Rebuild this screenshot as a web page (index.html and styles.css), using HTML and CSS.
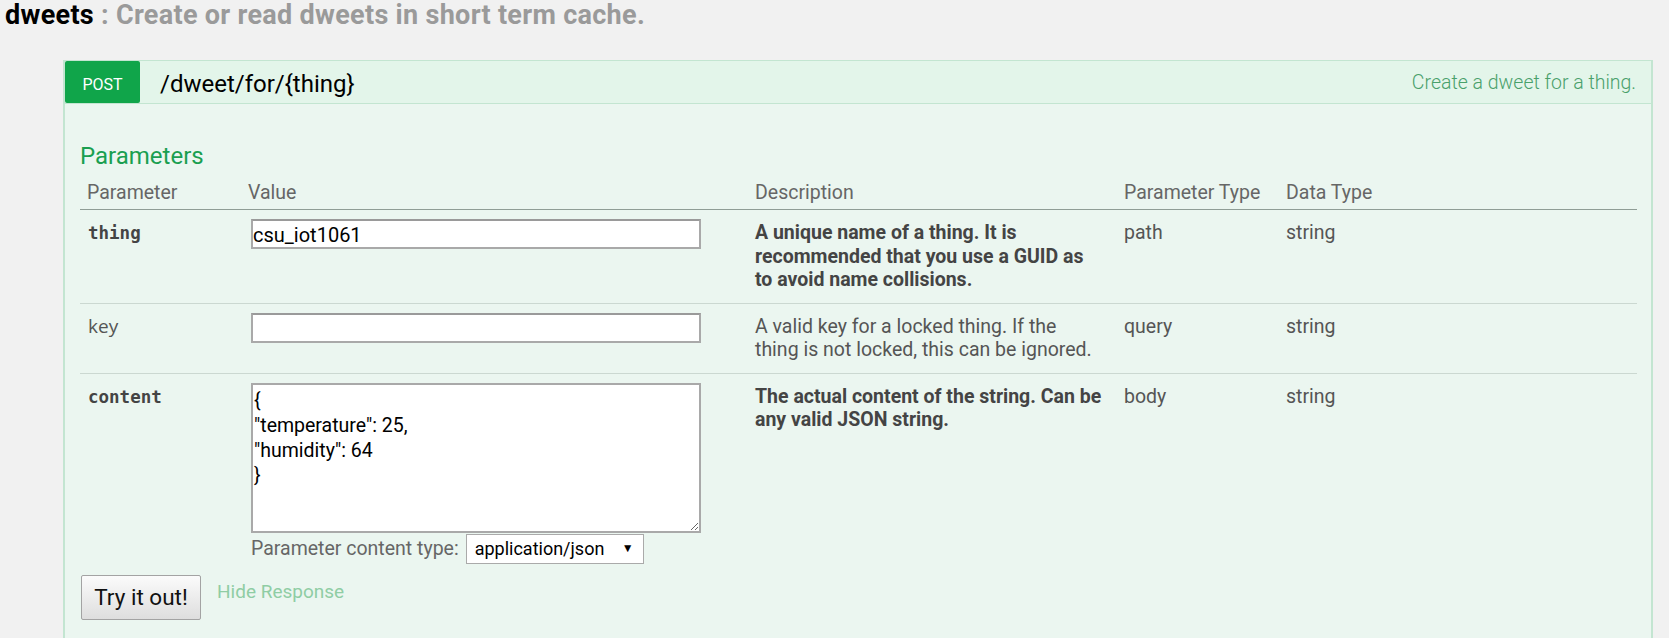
FILE: index.html
```html
<!DOCTYPE html>
<html lang="en">
<head>
<meta charset="utf-8">
<title>dweets</title>
<link rel="stylesheet" href="styles.css">
</head>
<body>
<div class="resource">
  <h2 class="res-title"><span class="res-name">dweets</span><span class="res-desc"> : Create or read dweets in short term cache.</span></h2>
  <div class="op">
    <div class="op-heading">
      <span class="method">POST</span>
      <span class="path">/dweet/for/{thing}</span>
      <span class="summary">Create a dweet for a thing.</span>
    </div>
    <div class="op-content">
      <h4 class="params-title">Parameters</h4>
      <table class="params">
        <thead>
          <tr>
            <th class="c-name">Parameter</th>
            <th class="c-value">Value</th>
            <th class="c-desc">Description</th>
            <th class="c-ptype">Parameter Type</th>
            <th class="c-dtype">Data Type</th>
          </tr>
        </thead>
        <tbody>
          <tr>
            <td class="c-name"><code class="req">thing</code></td>
            <td class="c-value"><input class="field" type="text" value="csu_iot1061"></td>
            <td class="c-desc"><strong>A unique name of a thing. It is<br>recommended that you use a GUID as<br>to avoid name collisions.</strong></td>
            <td class="c-ptype">path</td>
            <td class="c-dtype">string</td>
          </tr>
          <tr>
            <td class="c-name"><span class="opt">key</span></td>
            <td class="c-value"><input class="field" type="text" value=""></td>
            <td class="c-desc">A valid key for a locked thing. If the<br>thing is not locked, this can be ignored.</td>
            <td class="c-ptype">query</td>
            <td class="c-dtype">string</td>
          </tr>
          <tr class="last">
            <td class="c-name"><code class="req">content</code></td>
            <td class="c-value">
              <textarea class="body-area">{
"temperature": 25,
"humidity": 64
}</textarea>
              <div class="ctype">
                <span class="ctype-label">Parameter content type:</span>
                <span class="select-wrap">
                  <select class="select"><option>application/json</option></select>
                  <span class="select-arrow">▼</span>
                </span>
              </div>
            </td>
            <td class="c-desc"><strong>The actual content of the string. Can be<br>any valid JSON string.</strong></td>
            <td class="c-ptype">body</td>
            <td class="c-dtype">string</td>
          </tr>
        </tbody>
      </table>
      <div class="submit-row">
        <button class="try-btn" type="button">Try it out!</button>
        <a class="hide-resp" href="#">Hide Response</a>
      </div>
    </div>
  </div>
</div>
</body>
</html>
```
FILE: styles.css
```css
html, body {
  margin: 0;
  padding: 0;
  background: #f1f1f1;
  font-family: Roboto, "Liberation Sans", sans-serif;
  overflow: hidden;
}

.res-title {
  margin: 0 0 30px 5px;
  font-size: 27px;
  line-height: 30px;
  letter-spacing: 0.3px;
  font-weight: 700;
  white-space: nowrap;
}
.res-name { color: #000; }
.res-desc { color: #9a9a9a; }

.op {
  margin: 0 16px 0 63px;
}

.op-heading {
  display: flex;
  align-items: flex-start;
  background: #e3f5ea;
  border: 1px solid #c3e5d1;
  border-left-width: 2px;
  border-right-width: 2px;
  height: 42px;
}

.method {
  box-sizing: border-box;
  width: 75px;
  height: 42px;
  padding-top: 6px;
  line-height: 36px;
  background: #10a54a;
  color: #fff;
  font-size: 16px;
  text-align: center;
  border-radius: 2px;
}

.path {
  margin: 10px 0 0 20px;
  font-size: 24px;
  line-height: 27px;
  color: #000;
}

.summary {
  margin: 8px 15px 0 auto;
  font-size: 19.5px;
  font-weight: 300;
  line-height: 27px;
  color: #49a06b;
}

.op-content {
  background: #ebf6f0;
  border: 2px solid #c3e5d1;
  border-top: 0;
  border-bottom: 0;
  padding: 39px 14px 30px 15px;
  height: 560px;
}

.params-title {
  margin: 0;
  font-size: 24px;
  line-height: 27px;
  font-weight: 400;
  color: #1a9f50;
}

.params {
  width: 100%;
  border-collapse: collapse;
  table-layout: fixed;
}

.params th {
  text-align: left;
  font-weight: 400;
  font-size: 19.5px;
  line-height: 24px;
  color: #666;
  padding: 11px 6px 4px 6px;
  border-bottom: 1px solid #8f9d96;
}

.params td {
  vertical-align: top;
  font-size: 19.5px;
  line-height: 23.5px;
  color: #555;
  padding: 11px 6px 11px 6px;
  border-bottom: 1px solid #cbd8d1;
  white-space: nowrap;
}
.params tr.last td {
  border-bottom: 0;
}

.params th.c-name { width: 149px; padding-left: 7px; }
.params th.c-value { width: 495px; }
.params th.c-desc { width: 357px; }
.params th.c-ptype { width: 150px; }

.params td.c-value {
  padding-top: 9px;
  padding-left: 9px;
}
.params td strong {
  font-weight: 700;
  color: #444;
}

.req {
  font-family: "DejaVu Sans Mono", monospace;
  font-weight: 700;
  font-size: 17.5px;
  color: #444;
  padding-left: 2px;
}
.opt {
  font-family: "Open Sans", sans-serif;
  font-size: 19px;
  color: #555;
  padding-left: 2px;
}

.field {
  box-sizing: border-box;
  display: block;
  width: 450px;
  height: 30px;
  margin: 0;
  padding: 2px 1px 0 0;
  border: 2px solid #a9a9a9;
  border-top-color: #9a9a9a;
  background: #fff;
  font-family: Roboto, sans-serif;
  font-size: 20px;
  color: #000;
  outline: none;
}

.body-area {
  box-sizing: border-box;
  display: block;
  width: 450px;
  height: 150px;
  margin: 0;
  padding: 3px 1px;
  border: 2px solid #a9a9a9;
  background: #fff;
  font-family: Roboto, sans-serif;
  font-size: 19.5px;
  line-height: 25px;
  color: #000;
  resize: both;
  outline: none;
}

.ctype {
  display: flex;
  align-items: center;
  height: 30px;
  margin-top: 1px;
}
.ctype-label {
  font-size: 19.5px;
  line-height: 30px;
  color: #666;
  margin-right: 7px;
}
.select-wrap {
  position: relative;
  display: inline-block;
}
.select {
  appearance: none;
  -webkit-appearance: none;
  box-sizing: border-box;
  width: 178px;
  height: 30px;
  margin: 0;
  padding: 0 0 0 8px;
  border: 1px solid #aaa;
  border-radius: 0;
  background: #fff;
  font-family: Roboto, sans-serif;
  font-size: 18px;
  color: #000;
}
.select-arrow {
  position: absolute;
  right: 10px;
  top: 7px;
  font-size: 12px;
  line-height: 14px;
  color: #000;
  pointer-events: none;
}

.submit-row {
  display: flex;
  align-items: flex-start;
  margin-top: 0;
}

.try-btn {
  box-sizing: border-box;
  width: 120px;
  height: 45px;
  margin-left: 1px;
  padding: 0;
  border: 1px solid #a3a3a3;
  border-radius: 2px;
  background: linear-gradient(#fbfbfb, #dedede);
  font-family: Roboto, sans-serif;
  font-size: 22.5px;
  color: #111;
}

.hide-resp {
  margin: 6px 0 0 16px;
  font-size: 19px;
  line-height: 22px;
  color: #8fcda4;
  text-decoration: none;
}
```
